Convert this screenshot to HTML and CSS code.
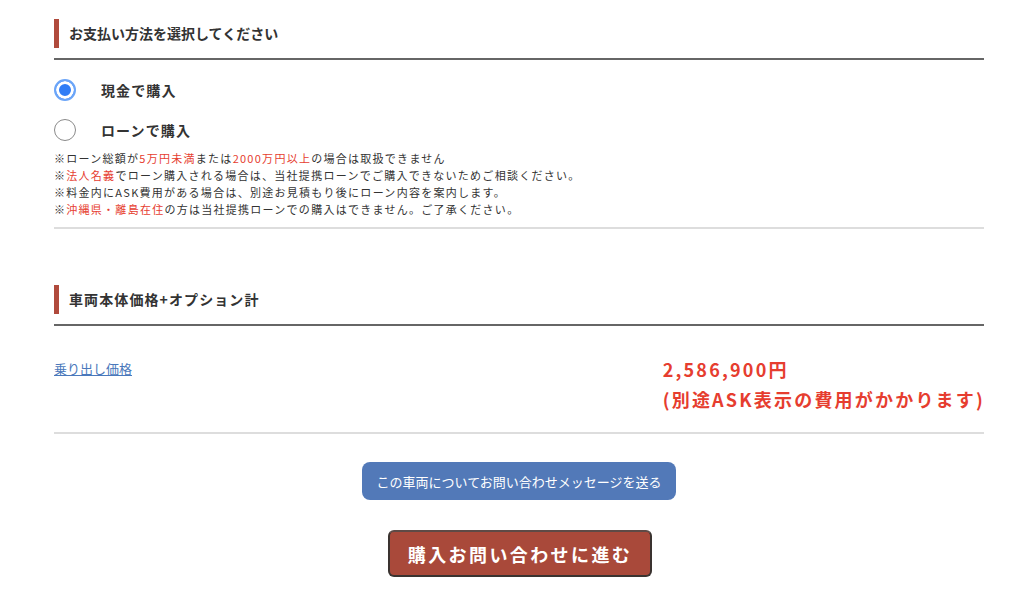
FILE: index.html
```html
<!DOCTYPE html>
<html lang="ja">
<head>
    <meta charset="UTF-8">
    <meta name="viewport" content="width=device-width, initial-scale=1.0">
    <title>お支払い方法</title>
    <link rel="stylesheet" href="styles.css">
</head>
<body>
    <div class="container">
        <!-- Payment method -->
        <section class="block">
            <h2 class="sec-title"><span>お支払い方法を選択してください</span></h2>

            <div class="pay-options">
                <label class="pay-option">
                    <input type="radio" name="pay" value="cash" checked>
                    <span>現金で購入</span>
                </label>
                <label class="pay-option">
                    <input type="radio" name="pay" value="loan">
                    <span>ローンで購入</span>
                </label>
            </div>

            <div class="notes">
                <p>※ローン総額が<em>5万円未満</em>または<em>2000万円以上</em>の場合は取扱できません</p>
                <p>※<em>法人名義</em>でローン購入される場合は、当社提携ローンでご購入できないためご相談ください。</p>
                <p>※料金内にASK費用がある場合は、別途お見積もり後にローン内容を案内します。</p>
                <p>※<em>沖縄県・離島在住</em>の方は当社提携ローンでの購入はできません。ご了承ください。</p>
            </div>
        </section>

        <!-- Price -->
        <section class="block block-price">
            <h2 class="sec-title sec-title-wide"><span>車両本体価格+オプション計</span></h2>

            <div class="price-row">
                <a href="#" class="price-label">乗り出し価格</a>
                <div class="price-value">
                    <p>2,586,900円</p>
                    <p>(別途ASK表示の費用がかかります)</p>
                </div>
            </div>
        </section>

        <div class="actions">
            <button class="btn btn-message">この車両についてお問い合わせメッセージを送る</button>
            <button class="btn btn-purchase">購入お問い合わせに進む</button>
        </div>
    </div>
</body>
</html>
```

FILE: styles.css
```css
:root {
    --accent-red: #b04a3c;
    --text-primary: #333333;
    --text-alert: #e63d2f;
    --link-color: #4a78bb;
    --line-dark: #666666;
    --line-light: #dddddd;
}

* {
    box-sizing: border-box;
}

body {
    margin: 0;
    font-family: "Noto Sans CJK JP", "Noto Sans", sans-serif;
    color: var(--text-primary);
    background: #ffffff;
}

.container {
    padding: 19px 40px 0 54px;
}

p {
    margin: 0;
}

/* Section heading */
.sec-title {
    margin: 0;
    padding-bottom: 10px;
    border-bottom: 2px solid var(--line-dark);
    font-size: 14px;
    font-weight: 700;
}

.sec-title span {
    display: block;
    border-left: 5px solid var(--accent-red);
    padding-left: 10px;
    line-height: 29px;
}

.sec-title-wide span {
    letter-spacing: 1.1px;
}

.block {
    border-bottom: 2px solid var(--line-light);
}

/* Payment options */
.pay-options {
    display: flex;
    flex-direction: column;
    gap: 18px;
    padding-top: 19px;
}

.pay-option {
    display: flex;
    align-items: center;
    gap: 25px;
    font-size: 14px;
    font-weight: 700;
    letter-spacing: 0.08em;
    cursor: pointer;
}

.pay-option input {
    appearance: none;
    -webkit-appearance: none;
    margin: 0;
    width: 22px;
    height: 22px;
    border-radius: 50%;
    border: 1.5px solid #8a8a8a;
    background: #ffffff;
}

.pay-option input:checked {
    border: 2px solid #6ba5f8;
    background: #2f7cf6;
    box-shadow: inset 0 0 0 3px #ffffff;
}

.notes {
    padding: 9px 0 9px;
    font-size: 11px;
    line-height: 17px;
    letter-spacing: 1.27px;
}

.notes em {
    font-style: normal;
    color: var(--text-alert);
}

/* Price */
.block-price {
    margin-top: 56px;
}

.price-row {
    display: flex;
    justify-content: space-between;
    align-items: flex-start;
    padding: 28px 0 18px;
}

.price-label {
    font-size: 13px;
    line-height: 30px;
    color: var(--link-color);
    text-decoration: underline;
}

.price-value {
    color: var(--text-alert);
    font-size: 18px;
    font-weight: 700;
    line-height: 30px;
    letter-spacing: 2.2px;
    margin-right: -1px;
}

/* Buttons */
.actions {
    display: flex;
    flex-direction: column;
    align-items: center;
    gap: 30px;
    padding-top: 28px;
}

.btn {
    font-family: inherit;
    color: #ffffff;
    cursor: pointer;
}

.btn-message {
    width: 314px;
    height: 38px;
    border: none;
    border-radius: 8px;
    background: #5279b8;
    font-size: 13px;
}

.btn-purchase {
    width: 264px;
    height: 47px;
    border: 2px solid #3a3330;
    border-top-color: #5e4a46;
    border-radius: 6px;
    background: #a9493a;
    font-size: 18px;
    font-weight: 700;
    letter-spacing: 2.4px;
    margin-left: 2px;
}
```
